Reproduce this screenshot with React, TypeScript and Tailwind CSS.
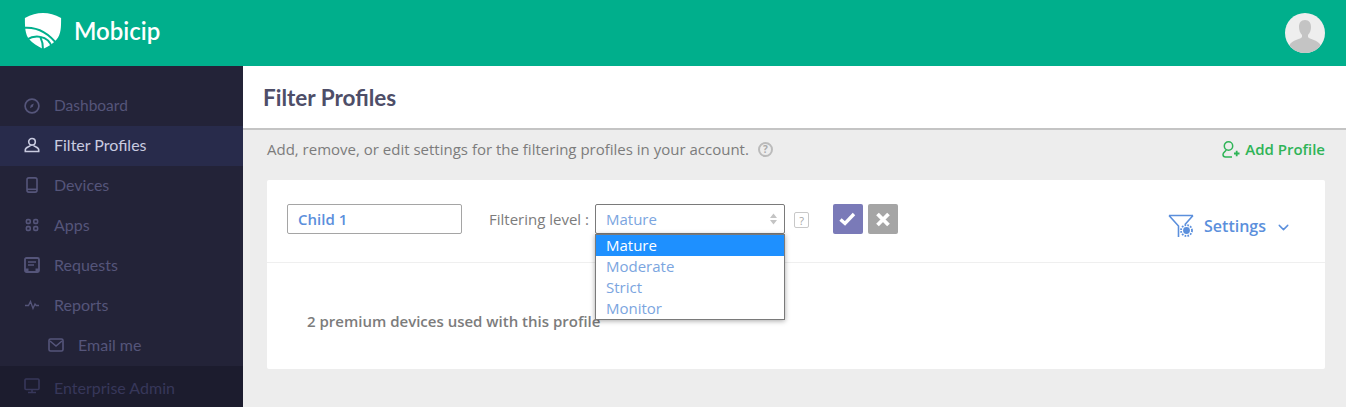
import { ChevronDown } from "lucide-react";
import type { ReactNode } from "react";

const Ico = ({ children, size = 16 }: { children: ReactNode; size?: number }) => (
  <svg width={size} height={size} viewBox="0 0 16 16" fill="none" stroke="currentColor" strokeWidth="1.6">
    {children}
  </svg>
);

const navItems: { label: string; icon: ReactNode; active?: boolean; cls?: string }[] = [
  {
    label: "Dashboard",
    cls: "pb-0 text-[15.5px]",
    icon: (
      <Ico>
        <circle cx="8" cy="8" r="6.9" strokeWidth="1.7" />
        <path d="M6 10.2 6.8 7l3-1.6-1 3.4z" fill="currentColor" stroke="none" />
      </Ico>
    ),
  },
  {
    label: "Filter Profiles",
    active: true,
    cls: "pb-[2px]",
    icon: (
      <Ico>
        <circle cx="8" cy="4.8" r="3.3" />
        <path d="M6.3 8.2c0 1.600-5 1.500-5 4.600v1.700h13.400v-1.700c0-3.100-5-3-5-4.600" />
      </Ico>
    ),
  },
  {
    label: "Devices",
    cls: "pb-[2px]",
    icon: (
      <Ico>
        <rect x="3" y="0.9" width="10" height="14.200" rx="1.800" />
        <path d="M3 12.300h10" />
      </Ico>
    ),
  },
  {
    label: "Apps",
    cls: "pb-[2px]",
    icon: (
      <Ico>
        <rect x="2.400" y="2.600" width="3.800" height="3.800" rx="1.200" />
        <rect x="9.800" y="2.600" width="3.800" height="3.800" rx="1.200" />
        <rect x="2.400" y="9.600" width="3.800" height="3.800" rx="1.200" />
        <rect x="9.800" y="9.600" width="3.800" height="3.800" rx="1.200" />
      </Ico>
    ),
  },
  {
    label: "Requests",
    cls: "pb-[2px]",
    icon: (
      <Ico>
        <rect x="1" y="1" width="14" height="14" rx="1.500" strokeWidth="1.800" />
        <path d="M4 5h8M4 8h6" />
        <path d="M1 11.500h3.500v3h7v-3H15V15H1z" fill="currentColor" stroke="none" />
      </Ico>
    ),
  },
  {
    label: "Reports",
    cls: "pb-[2px]",
    icon: (
      <Ico>
        <path d="M1 8.500h3.500l2-4 2.500 7 2-4.500 1.300 1.500H15" strokeWidth="1.300" />
      </Ico>
    ),
  },
];

const Logo = () => (
  <svg width="38" height="40" viewBox="0 0 42 41" fill="none">
    <path
      d="M1 6C8 2 14 .5 21 .5S34 2 41 6c0 10 0 18-5 24-3 4-8 7-15 10.500C15 37 9 34 6 30 1 24 1 15 1 6z"
      fill="#fff"
    />
    <path d="M0 17c13-1 27 5 38 20" stroke="#00af8c" strokeWidth="2.200" />
    <path d="M3 30c5-3 10-4 15-3 6 1 11 5 13 12" stroke="#00af8c" strokeWidth="2.200" />
    <path d="M18 27c2 4 3 8 3 14" stroke="#00af8c" strokeWidth="2.200" />
  </svg>
);

const Avatar = () => (
  <svg width="40" height="40" viewBox="0 0 40 40" className="rounded-full">
    <rect width="40" height="40" fill="#eeeeee" />
    <path
      d="M20 7c4.200 0 6 3 6 7 0 3-1 6-3 8v2c1 2 9 3 12 7 1 2 1 5 1 9H4c0-4 0-7 1-9 3-4 11-5 12-7v-2c-2-2-3-5-3-8 0-4 1.800-7 6-7z"
      fill="#c4c4c4"
    />
  </svg>
);

const SettingsIcon = () => (
  <svg width="26" height="24" viewBox="0 0 26 24" fill="none" stroke="#5b8fdc">
    <path d="M1 1.500h24M1 1.500l9.500 10.500v11M25 1.500l-8 9" strokeWidth="1.600" />
    <circle cx="18.500" cy="16.500" r="3.400" fill="#5b8fdc" stroke="none" />
    <circle cx="18.500" cy="16.500" r="5.500" strokeWidth="1.800" strokeDasharray="1.700 1.200" />
  </svg>
);

const AddProfileIcon = () => (
  <svg width="18" height="17" viewBox="0 0 18 17" fill="none" stroke="#2fb457" strokeWidth="1.500">
    <circle cx="6.500" cy="5" r="4.200" />
    <path d="M4 9c0 1.500-3 2-3 4.500 0 1.500 1 2.500 2.500 2.500H10" />
    <path d="M12 12.500h5.500M14.700 9.700v5.500" strokeWidth="1.800" />
  </svg>
);

const options = ["Mature", "Moderate", "Strict", "Monitor"];

export default function App() {
  return (
    <div className="h-[407px] w-[1346px] overflow-hidden bg-[#ededed] font-['Open_Sans',sans-serif]">
      <header className="flex h-[66px] items-center justify-between bg-[#00af8c] pl-6 pr-[21px]">
        <div className="flex items-center gap-3 pb-[4px]">
          <Logo />
          <span className="font-['Lato',sans-serif] text-[24px] font-semibold leading-none text-white">Mobicip</span>
        </div>
        <Avatar />
      </header>

      <div className="flex h-[341px]">
        <aside className="flex w-[243px] shrink-0 flex-col bg-[#232338] pt-5 font-['Lato',sans-serif] text-base">
          {navItems.map((item) => (
            <div
              key={item.label}
              className={`flex h-10 items-center gap-[14px] pl-6 ${
                item.active ? "bg-[#282b4b] text-[#c9cbe0]" : "text-[#55557a]"
              } ${item.cls ?? ""}`}
            >
              {item.icon}
              <span>{item.label}</span>
            </div>
          ))}
          <div className="flex h-10 items-center gap-[14px] pb-[2px] pl-12 text-[#55557a]">
            <Ico>
              <rect x="1" y="2" width="14" height="12" rx="1.500" />
              <path d="m2 4 6 5 6-5" />
            </Ico>
            <span>Email me</span>
          </div>
          <div className="flex flex-1 items-start gap-[14px] bg-[#1c1c2e] pl-6 pt-[10px] text-[#37375a]">
            <span className="mt-[2px]">
              <Ico>
                <rect x="1" y="1" width="14" height="10.500" rx="1" />
                <path d="M8 11.500V14M4 14.500h8" />
              </Ico>
            </span>
            <span>Enterprise Admin</span>
          </div>
        </aside>

        <main className="min-w-0 flex-1">
          <div className="flex h-[64px] items-center border-b-2 border-[#c4c4c4] bg-white pl-5 pt-[1px]">
            <h1 className="font-['Lato',sans-serif] text-[22.5px] font-bold text-[#4e4e68]">Filter Profiles</h1>
          </div>

          <div className="flex h-[50px] items-start justify-between pl-6 pr-[21px] pt-2">
            <div className="flex items-center gap-[9px] text-[15px] text-[#7c7c7c]">
              <span>Add, remove, or edit settings for the filtering profiles in your account.</span>
              <span className="flex h-[15px] w-[15px] items-center justify-center rounded-full border-2 border-[#bbbbbb] text-[10px] font-bold leading-none text-[#aaaaaa]">
                ?
              </span>
            </div>
            <div className="flex items-center gap-[5px] text-[15px] font-semibold text-[#2fb457]">
              <AddProfileIcon />
              <span>Add Profile</span>
            </div>
          </div>

          <section className="ml-6 mr-[21px] h-[189px] rounded-[2px] bg-white">
            <div className="flex h-[83px] items-start border-b border-[#efefef] pl-5 pr-[33px] pt-6">
              <div className="flex h-[30px] w-[175px] items-center rounded-[2px] border border-[#a5a5a5] pl-[10px] text-[15px] font-semibold text-[#5b8fdc]">
                Child 1
              </div>
              <span className="ml-[27px] mt-[4px] text-[15px] text-[#7c7c7c]">Filtering level :</span>

              <div className="relative ml-[6px] h-[30px] w-[190px]">
                <div className="flex h-full items-center justify-between rounded-[2px] border border-[#7a7a7a] pl-[10px] pr-[6px] text-[15px] text-[#7ba5e0]">
                  <span>Mature</span>
                  <svg width="9" height="14" viewBox="0 0 9 14" fill="#c4c4c4">
                    <path d="M4.500 1.500 8 6H1zM4.500 12.500 1 8h7z" />
                  </svg>
                </div>
                <ul className="absolute left-0 top-[30px] w-[190px] border border-[#7a7a7a] bg-white text-[15px] leading-[21px] text-[#7ba5e0] shadow-[0_1px_5px_rgba(0,0,0,0.35)]">
                  {options.map((o, i) => (
                    <li key={o} className={`h-[21px] pl-[10px] ${i === 0 ? "bg-[#1e90ff] text-white" : ""}`}>
                      {o}
                    </li>
                  ))}
                </ul>
              </div>

              <span className="ml-[9px] mt-[8px] flex h-[16px] w-[15px] items-center justify-center rounded-[2px] border border-[#c8c8c8] text-[11px] leading-none text-[#a5a5a5]">
                ?
              </span>
              <button className="ml-6 flex h-[30px] w-[30px] items-center justify-center rounded-[2px] bg-[#7a7ab8]">
                <svg width="30" height="30" viewBox="0 0 30 30" fill="none" stroke="#fff" strokeWidth="3.400">
                  <path d="m7.500 15.500 4.500 4 9-9.500" />
                </svg>
              </button>
              <button className="ml-[5px] flex h-[30px] w-[30px] items-center justify-center rounded-[2px] bg-[#a5a5a5]">
                <svg width="30" height="30" viewBox="0 0 30 30" fill="none" stroke="#fff" strokeWidth="3.800">
                  <path d="m9.500 10 11 11M20.500 10l-11 11" />
                </svg>
              </button>

              <div className="ml-auto mt-[10px] flex items-center text-base font-semibold text-[#5b8fdc]">
                <SettingsIcon />
                <span className="ml-[10px]">Settings</span>
                <ChevronDown size={17} strokeWidth={2} className="ml-[9px] mt-[2px]" />
              </div>
            </div>
            <p className="pl-10 pt-[47px] text-[15px] font-semibold text-[#7c7c7c]">
              2 premium devices used with this profile
            </p>
          </section>
        </main>
      </div>
    </div>
  );
}
